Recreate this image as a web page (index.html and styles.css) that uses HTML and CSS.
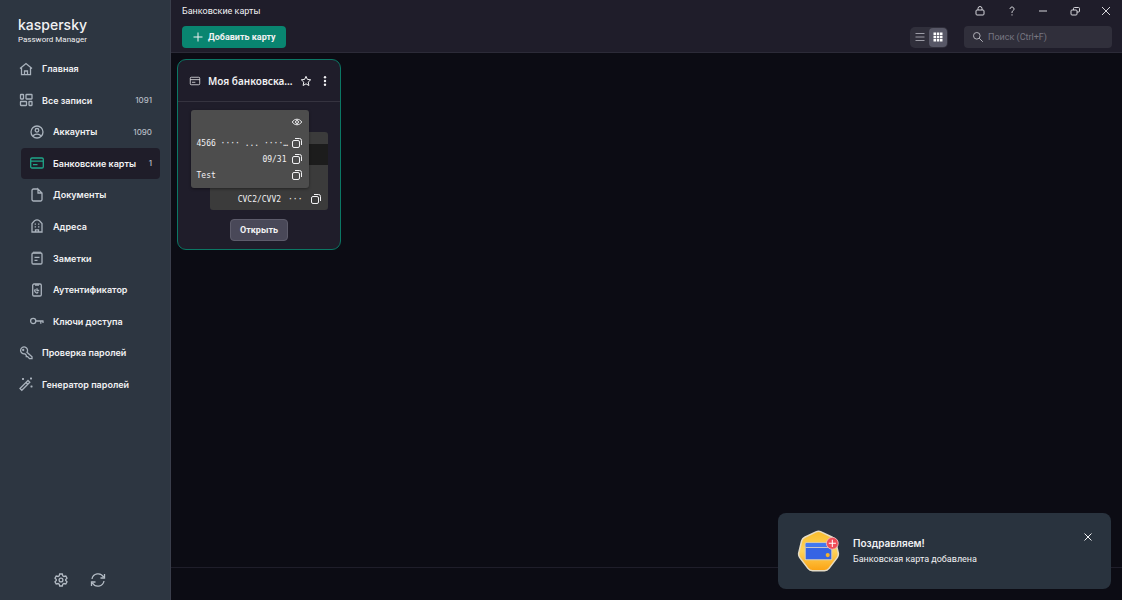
FILE: index.html
```
<!DOCTYPE html>
<html lang="ru">
<head>
    <meta charset="UTF-8">
    <meta name="viewport" content="width=device-width, initial-scale=1.0">
    <title>Kaspersky Password Manager</title>
    <link rel="stylesheet" href="styles.css">
</head>
<body>
    <!-- Shared icons -->
    <svg class="sprite" aria-hidden="true">
        <symbol id="copy" viewBox="0 0 12 12">
            <rect x="1.500" y="3.500" width="7" height="7" rx="1.500"/>
            <path d="M4 1.500h4.500a2 2 0 0 1 2 2V8"/>
        </symbol>
        <symbol id="card" viewBox="0 0 16 16">
            <rect x="1.700" y="3" width="12.600" height="10" rx="1.300"/>
            <path d="M1.700 6.200h12.600M4 9.700h4.500"/>
        </symbol>
    </svg>
    <div class="app">
        <aside class="sidebar">
            <div class="brand">
                <div class="brand-name">kaspersky</div>
                <div class="brand-product">Password Manager</div>
            </div>
            <nav class="menu">
                <a href="#" class="menu-item">
                    <svg class="icon" viewBox="0 0 16 16"><path d="M2 7.500 8 2.500l6 5M3.500 6.500v7.200h9V6.500M6.500 13.700V10h3v3.700"/></svg>
                    <span>Главная</span>
                </a>
                <a href="#" class="menu-item">
                    <svg class="icon" viewBox="0 0 16 16"><rect x="2.500" y="2.500" width="3" height="4.500" rx=".5"/><rect x="8" y="2.500" width="6" height="4.500" rx=".5"/><rect x="2.500" y="9.500" width="6" height="4" rx=".5"/><rect x="11" y="9.500" width="3" height="4" rx=".5"/></svg>
                    <span>Все записи</span>
                    <span class="count">1091</span>
                </a>
                <a href="#" class="menu-item sub">
                    <svg class="icon" viewBox="0 0 16 16"><circle cx="8" cy="8" r="6"/><circle cx="8" cy="6.300" r="1.800"/><path d="M4.200 12.200c.6-2.800 7-2.800 7.600 0"/></svg>
                    <span>Аккаунты</span>
                    <span class="count">1090</span>
                </a>
                <a href="#" class="menu-item sub active">
                    <svg class="icon"><use href="#card"/></svg>
                    <span>Банковские карты</span>
                    <span class="count">1</span>
                </a>
                <a href="#" class="menu-item sub">
                    <svg class="icon" viewBox="0 0 16 16"><path d="M9 2H4.500A1.500 1.500 0 0 0 3 3.500v9A1.500 1.500 0 0 0 4.500 14h7a1.500 1.500 0 0 0 1.500-1.500V6L9 2v4h4"/></svg>
                    <span>Документы</span>
                </a>
                <a href="#" class="menu-item sub">
                    <svg class="icon" viewBox="0 0 16 16"><path d="M3 14V5.500L5.500 2.700Q8 1.200 10.500 2.700L13 5.500V14ZM6.500 14v-2.200h3V14M6.300 5.500v1.200M9.700 5.500v1.200M6.300 8.300v1.200M9.700 8.300v1.200"/></svg>
                    <span>Адреса</span>
                </a>
                <a href="#" class="menu-item sub">
                    <svg class="icon" viewBox="0 0 16 16"><rect x="3" y="3" width="10" height="11" rx="1.200"/><path d="M5 1.500V3.500M7 1.500V3.500M9 1.500V3.500M11 1.500V3.500M5.500 7.300h5M5.500 10.300h3"/></svg>
                    <span>Заметки</span>
                </a>
                <a href="#" class="menu-item sub">
                    <svg class="icon" viewBox="0 0 16 16"><rect x="3.700" y="2" width="8.600" height="12" rx="1.300"/><path d="M6 3h4M8 6.300V8.500h2.200M6.500 7.300a2 2 0 0 0 2.700 3"/></svg>
                    <span>Аутентификатор</span>
                </a>
                <a href="#" class="menu-item sub">
                    <svg class="icon" viewBox="0 0 16 16"><circle cx="4.200" cy="8" r="2.600"/><path d="M7 8h7.500M11.800 8v2.700M14 8v2"/></svg>
                    <span>Ключи доступа</span>
                </a>
                <a href="#" class="menu-item">
                    <svg class="icon" viewBox="0 0 16 16"><path d="M9 7.300A3.500 3.500 0 1 0 6.800 8.800L8.300 10.300V11.600H9.600L11.500 13.700H14V11.700Z"/><circle cx="5.200" cy="5" r=".5"/></svg>
                    <span>Проверка паролей</span>
                </a>
                <a href="#" class="menu-item">
                    <svg class="icon" viewBox="0 0 16 16"><path d="m2 12.500 8-8 1.800 1.800-8 8ZM8 6.500l1.800 1.800"/><path d="M5 2v2M4 3h2M13 1.500v2M12 2.500h2M13.500 9.500v2M12.500 10.500h2"/></svg>
                    <span>Генератор паролей</span>
                </a>
            </nav>
            <div class="sidebar-tools">
                <button aria-label="Настройки">
                    <svg class="icon" viewBox="0 0 16 16"><path d="M6.700 2h2.600l.5 1.900 1.100.6 1.900-.5 1.200 2.200-1.300 1.300v1l1.300 1.300-1.200 2.200-1.900-.5-1.100.6-.5 1.900H6.700l-.5-1.900-1.100-.6-1.900.5L2 9.800l1.300-1.300v-1L2 6.200 3.200 4l1.900.5 1.100-.6Z"/><circle cx="8" cy="8" r="1.900"/></svg>
                </button>
                <button aria-label="Синхронизация">
                    <svg class="icon" viewBox="0 0 16 16"><path d="M2 7a6.200 6.200 0 0 1 11.500-2M14.500 2v4h-4M14 9a6.200 6.200 0 0 1-11.500 2M1.500 14v-4h4"/></svg>
                </button>
            </div>
        </aside>

        <div class="content">
            <header class="top">
                <div class="title-bar">
                    <h1>Банковские карты</h1>
                    <div class="window-buttons">
                        <button aria-label="Заблокировать"><svg class="icon" viewBox="0 0 12 12"><rect x="2" y="5" width="8" height="5" rx="1"/><path d="M4 5V3.500a2 2 0 0 1 4 0V5"/></svg></button>
                        <button aria-label="Справка"><svg class="icon" viewBox="0 0 12 12"><path d="M4 4a2 2 0 1 1 3.200 1.600C6.300 6.200 6 6.600 6 8M6 9.300v1.200"/></svg></button>
                        <button aria-label="Свернуть"><svg class="icon" viewBox="0 0 12 12"><path d="M2 6h8"/></svg></button>
                        <button aria-label="Восстановить"><svg class="icon" viewBox="0 0 12 12"><rect x="2" y="5" width="6" height="5" rx="1"/><path d="M4.500 5V3.500a1 1 0 0 1 1-1h4a1 1 0 0 1 1 1V6a1 1 0 0 1-1 1H8"/></svg></button>
                        <button aria-label="Закрыть"><svg class="icon" viewBox="0 0 12 12"><path d="m2 2 8 8M10 2l-8 8"/></svg></button>
                    </div>
                </div>
                <div class="toolbar">
                    <button class="btn-add">
                        <svg class="icon" viewBox="0 0 12 12"><path d="M6 1.500v9M1.500 6h9"/></svg>
                        Добавить карту
                    </button>
                    <div class="view-switch">
                        <button aria-label="Список"><svg class="icon" viewBox="0 0 12 12"><path d="M1.500 2.500h9M1.500 6h9M1.500 9.500h9"/></svg></button>
                        <button class="selected" aria-label="Плитка"><svg class="icon dots" viewBox="0 0 12 12"><path d="M1.500 1.500H4V4H1.500zM4.800 1.500h2.500V4H4.800zM8 1.500h2.500V4H8zM1.500 4.800H4v2.500H1.500zM4.800 4.800h2.500v2.500H4.800zM8 4.800h2.500v2.500H8zM1.500 8H4v2.500H1.500zM4.800 8h2.500v2.500H4.800zM8 8h2.500v2.500H8z"/></svg></button>
                    </div>
                    <label class="search">
                        <svg class="icon" viewBox="0 0 12 12"><circle cx="4.800" cy="4.800" r="3.300"/><path d="m7.200 7.200 3.600 3.600"/></svg>
                        <input type="text" placeholder="Поиск (Ctrl+F)" aria-label="Поиск">
                    </label>
                </div>
            </header>

            <main class="cards">
                <article class="card">
                    <div class="card-head">
                        <svg class="icon"><use href="#card"/></svg>
                        <h2>Моя банковска...</h2>
                        <button aria-label="В избранное"><svg class="icon" viewBox="0 0 12 12"><path d="m6 1.300 1.400 3.100 3.300.4-2.500 2.300.7 3.400L6 8.800l-2.900 1.700.7-3.400-2.500-2.300 3.300-.4Z"/></svg></button>
                        <button aria-label="Ещё"><svg class="icon dots" viewBox="0 0 12 12"><circle cx="6" cy="2.300" r="1.200"/><circle cx="6" cy="6" r="1.200"/><circle cx="6" cy="9.700" r="1.200"/></svg></button>
                    </div>
                    <div class="card-body">
                        <div class="plastic">
                            <div class="side front">
                                <div class="row end">
                                    <button aria-label="Показать"><svg class="icon" viewBox="0 0 12 12"><path d="M1.300 6C3.500 2.300 8.500 2.300 10.700 6 8.500 9.700 3.500 9.700 1.300 6Z"/><circle cx="6" cy="6" r="1.500"/></svg></button>
                                </div>
                                <div class="row">
                                    <span class="number">4566 ···· ... ····…</span>
                                    <button aria-label="Скопировать номер"><svg class="icon"><use href="#copy"/></svg></button>
                                </div>
                                <div class="row end">
                                    <span>09/31</span>
                                    <button aria-label="Скопировать срок"><svg class="icon"><use href="#copy"/></svg></button>
                                </div>
                                <div class="row">
                                    <span>Test</span>
                                    <button aria-label="Скопировать имя"><svg class="icon"><use href="#copy"/></svg></button>
                                </div>
                            </div>
                            <div class="side back">
                                <div class="stripe"></div>
                                <div class="row end">
                                    <span>CVC2/CVV2</span>
                                    <span>···</span>
                                    <button aria-label="Скопировать код"><svg class="icon"><use href="#copy"/></svg></button>
                                </div>
                            </div>
                        </div>
                        <button class="btn-open">Открыть</button>
                    </div>
                </article>
            </main>

            <footer class="status">Подписка активна</footer>
        </div>
    </div>

    <!-- Notification -->
    <div class="toast" role="status">
        <svg class="toast-icon" viewBox="0 0 42 42">
            <defs>
                <linearGradient id="gold" x1="0" y1="0" x2="0" y2="1"><stop offset="0" stop-color="#f9bd2c"/><stop offset=".5" stop-color="#ffd35a"/><stop offset="1" stop-color="#fba313"/></linearGradient>
            </defs>
            <path d="M18.500 1.800q2.500-1.200 5 0l11 5.300q2.300 1.200 3 3.700l2.800 11.500q.5 2.500-1 4.700l-8 10.500q-1.700 2.200-4.500 2.200H15.200q-2.800 0-4.500-2.200l-8-10.500q-1.500-2.200-1-4.700l2.800-11.500q.7-2.500 3-3.700Z" fill="url(#gold)" stroke="#e5dcc5" stroke-width="1.500"/>
            <rect x="8" y="12.500" width="26" height="16.500" rx="1" fill="#3564e4" stroke="#d3cdbd"/>
            <path d="M8.500 13h25v3h-25z" fill="#3f78f3"/>
            <path d="M8.500 17h25" stroke="#d4cfc8"/>
            <circle cx="30" cy="24.500" r="2" fill="#f6b32b"/>
            <circle cx="34.500" cy="13" r="5.800" fill="#f04c57" stroke="#e8c6c8" stroke-width=".8"/>
            <path d="M34.500 9.500v7M31 13h7" stroke="#fff"/>
        </svg>
        <div class="toast-text">
            <strong>Поздравляем!</strong>
            <span>Банковская карта добавлена</span>
        </div>
        <button aria-label="Закрыть"><svg class="icon" viewBox="0 0 12 12"><path d="m2.500 2.500 7 7M9.500 2.500l-7 7"/></svg></button>
    </div>
</body>
</html>
```
FILE: styles.css
```
* {
    box-sizing: border-box;
}
body {
    margin: 0;
    background: #0c0c14;
    color: #f1f1f3;
    font-family: Roboto, "Liberation Sans", sans-serif;
    font-size: 9px;
}
h1, h2 {
    margin: 0;
    font-weight: 400;
}
button {
    display: flex;
    align-items: center;
    justify-content: center;
    padding: 0;
    border: none;
    background: none;
    color: inherit;
    font: inherit;
    cursor: pointer;
}
.sprite {
    display: none;
}
.icon {
    width: 12px;
    height: 12px;
    flex: none;
    fill: none;
    stroke: currentColor;
    stroke-width: 1;
}
.icon.dots {
    fill: currentColor;
    stroke: none;
}
.app {
    display: flex;
    min-height: 100vh;
}

/* Sidebar */
.sidebar {
    display: flex;
    flex-direction: column;
    width: 171px;
    flex: none;
    background: #2d3641;
    border-right: 1px solid #3a3e4b;
}
.brand {
    height: 53px;
    padding: 16px 18px 0;
}
.brand-name {
    font-family: Inter, sans-serif;
    font-size: 14px;
    font-weight: 500;
    line-height: 18px;
}
.brand-product {
    font-size: 8px;
    line-height: 12px;
}
.menu {
    display: grid;
    grid-auto-rows: 1fr;
    height: 347px;
    padding: 0 10px;
    font-family: Inter, sans-serif;
}
.menu-item {
    display: flex;
    align-items: center;
    gap: 8px;
    padding: 0 8px;
    border-radius: 4px;
    color: #f1f1f3;
    font-weight: 600;
    text-decoration: none;
}
.menu-item .icon {
    width: 16px;
    height: 16px;
    color: #a9b2bc;
    stroke-width: 1.3;
}
.menu-item.sub {
    margin-left: 11px;
}
.menu-item.active {
    background: #1f1d29;
}
.menu-item.active .icon {
    color: #1fa588;
}
.count {
    margin-left: auto;
    color: #b6bcc4;
    font-size: 8px;
    font-weight: 500;
}
.sidebar-tools {
    display: flex;
    gap: 21px;
    margin-top: auto;
    padding: 0 53px 12px;
}
.sidebar-tools .icon {
    width: 16px;
    height: 16px;
    color: #b4bcc5;
    stroke-width: 1.3;
}

/* Header */
.content {
    display: flex;
    flex-direction: column;
    flex: 1;
    min-width: 0;
}
.top {
    height: 53px;
    padding: 0 10px 0 11px;
    background: #1f1d2a;
    border-bottom: 1px solid #2c2b38;
}
.title-bar {
    display: flex;
    align-items: center;
    justify-content: space-between;
    height: 22px;
}
.title-bar h1 {
    font-size: 9px;
}
.window-buttons {
    display: flex;
    justify-content: space-between;
    width: 138px;
    color: #d5d5da;
}
.toolbar {
    display: flex;
    align-items: center;
    height: 30px;
}
.btn-add {
    gap: 4px;
    height: 22px;
    padding: 0 10px;
    border-radius: 4px;
    background: #098570;
    font-weight: 700;
}
.view-switch {
    display: flex;
    margin-left: auto;
    padding: 1px;
    border-radius: 5px;
    background: #302f3b;
}
.view-switch button {
    width: 18px;
    height: 19px;
    border-radius: 4px;
    color: #9b9ba5;
}
.view-switch .selected {
    background: #575766;
    color: #fff;
}
.search {
    display: flex;
    align-items: center;
    gap: 4px;
    width: 148px;
    height: 22px;
    margin-left: 16px;
    padding: 0 8px;
    border-radius: 4px;
    background: #302f3b;
    color: #b0b0b8;
}
.search input {
    width: 100%;
    min-width: 0;
    padding: 0;
    border: none;
    outline: none;
    background: none;
    color: #f1f1f3;
    font: inherit;
}
.search input::placeholder {
    color: #777681;
}

/* Bank cards */
.cards {
    display: flex;
    flex: 1;
    flex-wrap: wrap;
    align-items: flex-start;
    padding: 6px;
}
.card {
    width: 164px;
    border: 1px solid #0b7764;
    border-radius: 9px;
    background: #1f1d2a;
}
.card-head {
    display: flex;
    align-items: center;
    gap: 7px;
    height: 42px;
    padding: 0 11px;
    border-bottom: 1px solid #35333f;
}
.card-head h2 {
    flex: 1;
    font-family: "Noto Sans", sans-serif;
    font-size: 10px;
    font-weight: 600;
    white-space: nowrap;
}
.card-body {
    display: flex;
    flex-direction: column;
    align-items: center;
    gap: 9px;
    padding: 8px 12px;
}
.plastic {
    display: grid;
    grid-template-columns: 19px 99px 19px;
    grid-template-rows: 22px 56px 22px;
    font-family: "DejaVu Sans Mono", monospace;
    font-size: 8px;
}
.side {
    display: flex;
    flex-direction: column;
    border-radius: 3px;
}
.front {
    z-index: 1;
    grid-area: 1 / 1 / 3 / 3;
    justify-content: flex-end;
    padding: 4px 6px 5px;
    background: #4d4d4d;
    box-shadow: 0 1px 3px rgba(0, 0, 0, 0.4);
}
.front .row:first-child {
    margin-bottom: auto;
}
.back {
    grid-area: 2 / 2 / 4 / 4;
    justify-content: space-between;
    padding-bottom: 3px;
    background: #3b3b3b;
}
.stripe {
    height: 21px;
    margin-top: 12px;
    background: #1c1c1c;
}
.row {
    display: flex;
    align-items: center;
    justify-content: space-between;
    gap: 2px;
    height: 16px;
}
.row.end {
    gap: 4px;
    justify-content: flex-end;
}
.back .row.end {
    gap: 7px;
    padding: 0 6px;
}
.number {
    white-space: nowrap;
}
.btn-open {
    height: 22px;
    padding: 0 9px;
    border: 1px solid #5d5c6b;
    border-radius: 4px;
    background: #494858;
    font-weight: 700;
}
.status {
    height: 33px;
    padding: 10px 12px;
    border-top: 1px solid #1f1e2a;
    color: #22222c;
    text-align: right;
}

/* Notification */
.toast {
    position: fixed;
    right: 11px;
    bottom: 11px;
    display: flex;
    align-items: center;
    width: 333px;
    height: 76px;
    padding: 0 17px 0 19px;
    border-radius: 8px;
    background: #29333e;
}
.toast-icon {
    width: 43px;
    height: 43px;
    margin-right: 13px;
    fill: none;
}
.toast-text {
    display: flex;
    flex: 1;
    flex-direction: column;
    gap: 4px;
    line-height: 12px;
}
.toast-text strong {
    font-family: Inter, sans-serif;
    font-size: 10px;
    font-weight: 600;
}
.toast button {
    align-self: flex-start;
    margin-top: 18px;
}
```
